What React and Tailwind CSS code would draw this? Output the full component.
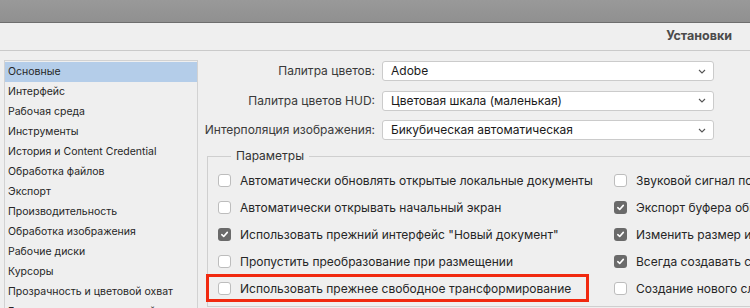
import React from 'react';

const categories = [
  'Основные',
  'Интерфейс',
  'Рабочая среда',
  'Инструменты',
  'История и Content Credential',
  'Обработка файлов',
  'Экспорт',
  'Производительность',
  'Обработка изображения',
  'Рабочие диски',
  'Курсоры',
  'Прозрачность и цветовой охват',
  'Единицы измерения и линейки',
];

const selects = [
  { label: 'Палитра цветов:', value: 'Adobe' },
  { label: 'Палитра цветов HUD:', value: 'Цветовая шкала (маленькая)' },
  { label: 'Интерполяция изображения:', value: 'Бикубическая автоматическая' },
];

const leftOptions = [
  { text: 'Автоматически обновлять открытые локальные документы', checked: false },
  { text: 'Автоматически открывать начальный экран', checked: false },
  { text: 'Использовать прежний интерфейс "Новый документ"', checked: true },
  { text: 'Пропустить преобразование при размещении', checked: false },
  { text: 'Использовать прежнее свободное трансформирование', checked: false, marked: true },
];

const rightOptions = [
  { text: 'Звуковой сигнал по завершении', checked: false },
  { text: 'Экспорт буфера обмена', checked: true },
  { text: 'Изменить размер изображения при вставке', checked: true },
  { text: 'Всегда создавать смарт-объекты', checked: true },
  { text: 'Создание нового слоя', checked: false },
];

function Checkbox({ checked }) {
  if (checked) {
    return (
      <span className="w-[13px] h-[13px] shrink-0 rounded-[3px] bg-[#6a6a6a] flex items-center justify-center">
        <svg width="9" height="9" viewBox="0 0 9 9">
          <path d="M1.8 4.7 L3.7 6.5 L7.3 2.4" fill="none" stroke="#fff" strokeWidth="1.6" strokeLinecap="round" strokeLinejoin="round" />
        </svg>
      </span>
    );
  }
  return <span className="w-[13px] h-[13px] shrink-0 rounded-[3px] bg-white border border-[#bdbdbd]" />;
}

function OptionRow({ option }) {
  return (
    <div className="relative h-[27px] flex items-center gap-[9px] whitespace-nowrap">
      <Checkbox checked={option.checked} />
      <span>{option.text}</span>
      {option.marked && (
        <div className="absolute left-[-12px] top-[-1px] w-[383px] h-[28px] border-[3px] border-[#f1290f]" />
      )}
    </div>
  );
}

export default function App() {
  return (
    <div className="w-[750px] h-[308px] overflow-hidden bg-[#efefef] text-[12px] text-[#262626] font-['Inter','Liberation_Sans',sans-serif]">
      {/* Title bar */}
      <div className="h-[23px] bg-gradient-to-b from-[#999999] to-[#909090] border-b border-[#6e6e6e]" />

      {/* Header */}
      <div className="h-[28px] flex items-center justify-end pr-[18px] border-b border-[#cacaca]">
        <span className="font-bold text-[12.5px] text-[#4b4b4b]">Установки</span>
      </div>

      <div className="flex pt-[9px]">
        {/* Category list */}
        <div className="ml-[4px] w-[194px] h-[260px] border-l border-r border-t border-[#d2d2d2] pt-[1px] shrink-0">
          {categories.map((c, i) => (
            <div
              key={c}
              className={`h-[20px] flex items-center pl-[3px] text-[10.5px] whitespace-nowrap ${i === 0 ? 'bg-[#b4cde9]' : ''}`}
            >
              {c}
            </div>
          ))}
        </div>

        {/* Settings */}
        <div className="flex-1 flex flex-col pt-[1px]">
          <div className="flex flex-col gap-[9.5px]">
            {selects.map((s) => (
              <div key={s.label} className="flex items-center h-[20px]">
                <span className="w-[177px] text-right text-[#3a3a3a] whitespace-nowrap">{s.label}</span>
                <div className="ml-[7px] w-[332px] h-[20px] bg-white border border-[#cbcbcb] rounded-[3px] flex items-center justify-between pl-[8px] pr-[7px] text-[#1a1a1a]">
                  <span className="whitespace-nowrap">{s.value}</span>
                  <svg width="8" height="5" viewBox="0 0 8 5">
                    <path d="M1 1 L4 4 L7 1" fill="none" stroke="#555" strokeWidth="1.1" />
                  </svg>
                </div>
              </div>
            ))}
          </div>

          <fieldset className="mt-[7px] ml-[9px] w-[600px] h-[160px] border border-[#cfcfcf] pl-[10px] pt-[2px]">
            <legend className="ml-[13px] px-[5px] text-[#333]">Параметры</legend>
            <div className="flex">
              <div className="w-[396px] shrink-0">
                {leftOptions.map((o) => (
                  <OptionRow key={o.text} option={o} />
                ))}
              </div>
              <div>
                {rightOptions.map((o) => (
                  <OptionRow key={o.text} option={o} />
                ))}
              </div>
            </div>
          </fieldset>
        </div>
      </div>
    </div>
  );
}
